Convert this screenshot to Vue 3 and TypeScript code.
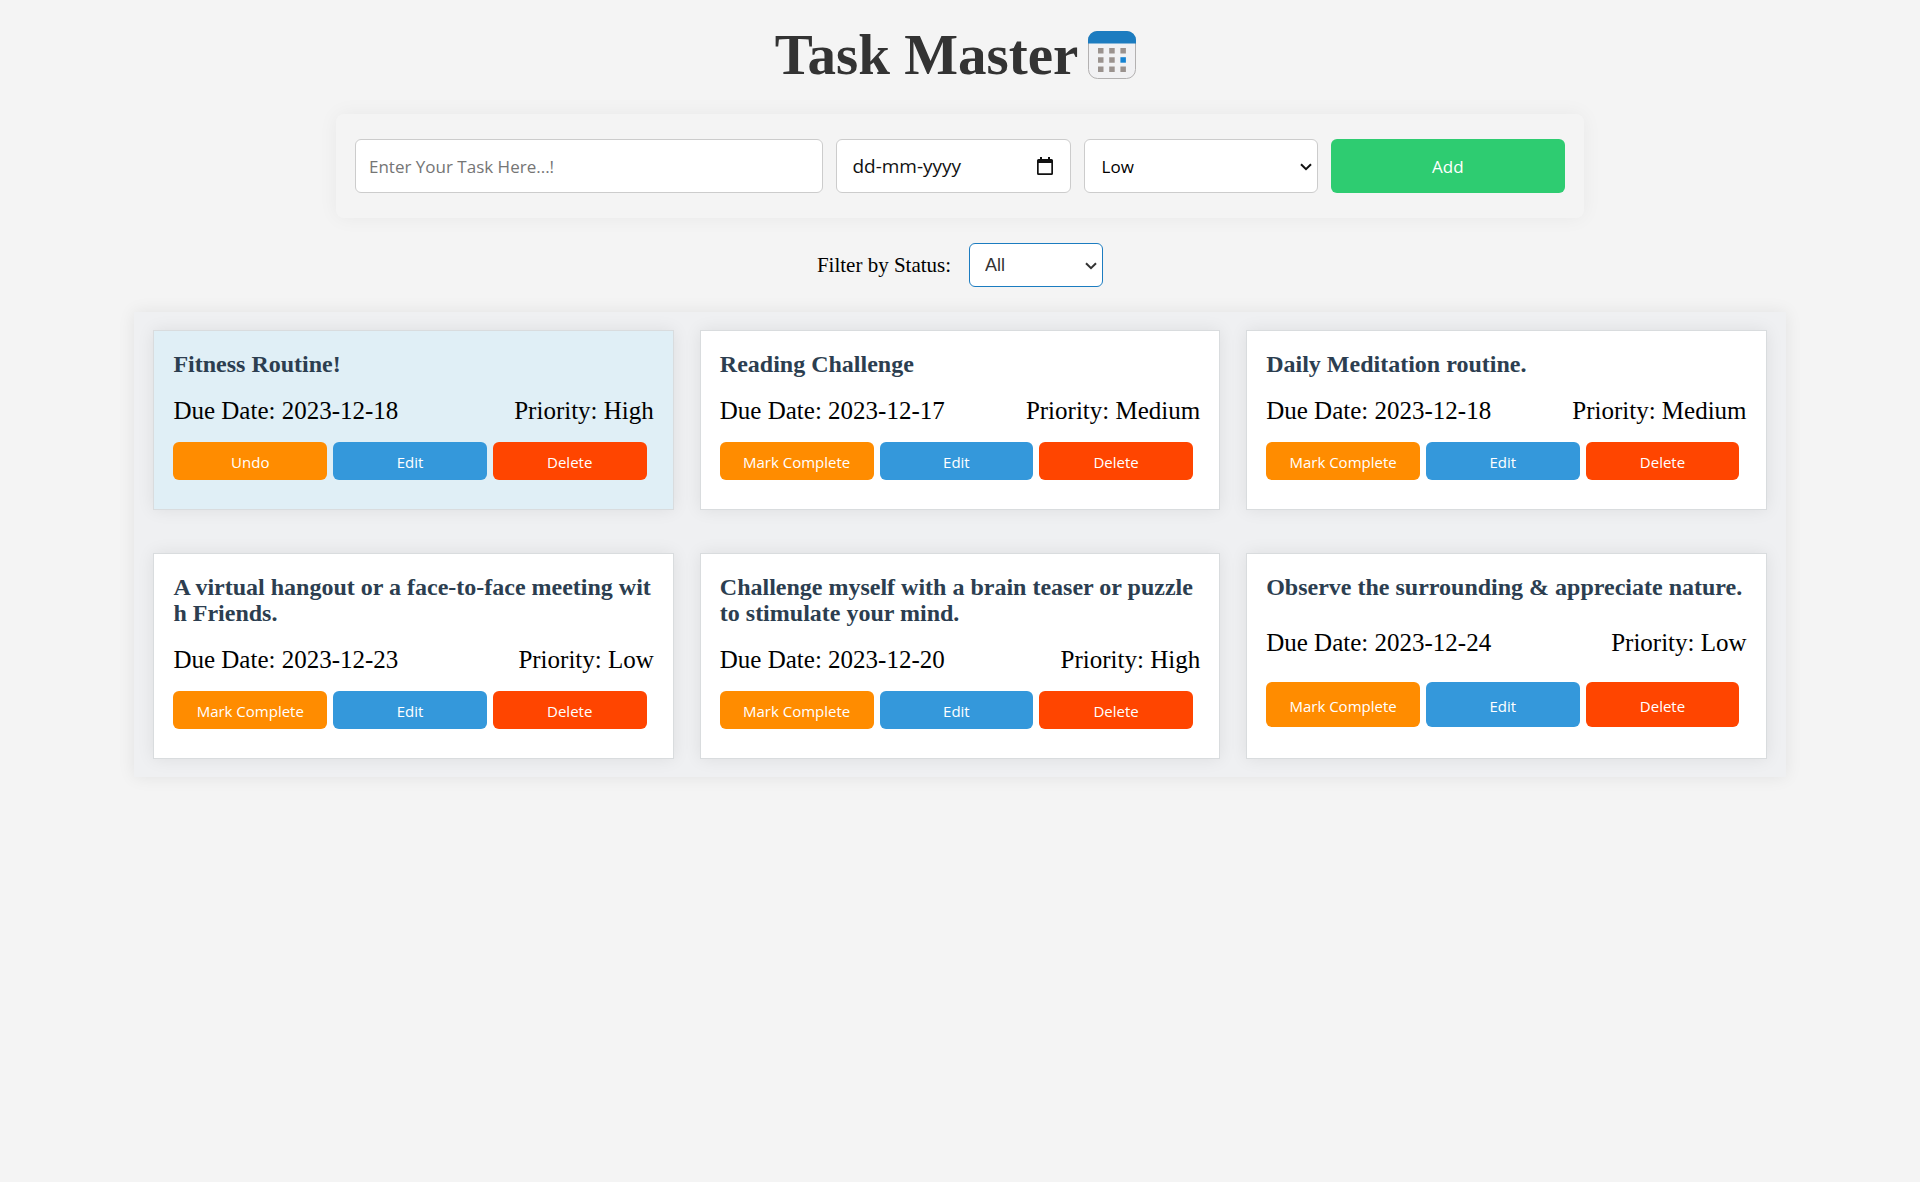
<script setup lang="ts">
import { ref, computed } from 'vue'

type Priority = 'Low' | 'Medium' | 'High'

interface Task {
  id: number
  title: string
  due: string
  priority: Priority
  done: boolean
}

const tasks = ref<Task[]>([
  { id: 1, title: 'Fitness Routine!', due: '2023-12-18', priority: 'High', done: true },
  { id: 2, title: 'Reading Challenge', due: '2023-12-17', priority: 'Medium', done: false },
  { id: 3, title: 'Daily Meditation routine.', due: '2023-12-18', priority: 'Medium', done: false },
  { id: 4, title: 'A virtual hangout or a face-to-face meeting wit\nh Friends.', due: '2023-12-23', priority: 'Low', done: false },
  { id: 5, title: 'Challenge myself with a brain teaser or puzzle\nto stimulate your mind.', due: '2023-12-20', priority: 'High', done: false },
  { id: 6, title: 'Observe the surrounding & appreciate nature.', due: '2023-12-24', priority: 'Low', done: false },
])

const newTitle = ref('')
const newDue = ref('')
const newPriority = ref<Priority>('Low')
const filter = ref('All')

const visibleTasks = computed(() =>
  tasks.value.filter((t) => filter.value === 'All' || (filter.value === 'Completed') === t.done),
)

function addTask() {
  if (!newTitle.value.trim()) return
  tasks.value.push({
    id: Date.now(),
    title: newTitle.value.trim(),
    due: newDue.value.split('-').reverse().join('-'),
    priority: newPriority.value,
    done: false,
  })
  newTitle.value = ''
  newDue.value = ''
}

function editTask(task: Task) {
  const title = window.prompt('Edit task', task.title)
  if (title) task.title = title
}

function removeTask(id: number) {
  tasks.value = tasks.value.filter((t) => t.id !== id)
}
</script>

<template>
  <div class="app">
    <h1 class="heading">
      Task Master
      <svg class="heading-icon" viewBox="0 0 48 48" aria-hidden="true">
        <rect x="0.5" y="0.5" width="47" height="47" rx="9" fill="#f1f1f3" stroke="#b3b1b1" />
        <path d="M0 12.5V9a9 9 0 0 1 9-9h30a9 9 0 0 1 9 9v3.5z" fill="#1c7cc0" />
        <g fill="#9a928e">
          <path d="M10 17h5.500v5.500H10zM21.200 17h5.500v5.500h-5.500zM32.400 17h5.500v5.500h-5.500z" />
          <path d="M10 26.200h5.500v5.500H10zM21.200 26.200h5.500v5.500h-5.500z" />
          <path d="M10 35.500h5.500V41H10zM21.200 35.500h5.500V41h-5.500zM32.400 35.500h5.500V41h-5.500z" />
        </g>
        <path d="M32.400 26.200h5.500v5.500h-5.500z" fill="#1583d2" />
      </svg>
    </h1>

    <form class="task-form" @submit.prevent="addTask">
      <input v-model="newTitle" class="field" type="text" placeholder="Enter Your Task Here...!" aria-label="Task" />
      <div class="control">
        <input v-model="newDue" class="field date-field" type="text" placeholder="dd-mm-yyyy" aria-label="Due date" />
        <svg class="date-icon" viewBox="0 0 16 18" aria-hidden="true">
          <path d="M3 0h2v2h6V0h2v2h1.500A1.500 1.500 0 0 1 16 3.500v13a1.500 1.500 0 0 1-1.500 1.500h-13A1.500 1.500 0 0 1 0 16.500v-13A1.500 1.500 0 0 1 1.500 2H3zM1.700 6v10.300h12.600V6z" fill="#111" />
        </svg>
      </div>
      <div class="control">
        <select v-model="newPriority" class="field pick" aria-label="Priority">
          <option>Low</option>
          <option>Medium</option>
          <option>High</option>
        </select>
        <svg class="chevron" viewBox="0 0 12 8" aria-hidden="true">
          <path d="M1 1.200l5 5 5-5" fill="none" stroke="#111" stroke-width="2" />
        </svg>
      </div>
      <button class="add" type="submit">Add</button>
    </form>

    <div class="filter">
      <label for="status">Filter by Status:</label>
      <div class="control">
        <select id="status" v-model="filter" class="filter-select">
          <option>All</option>
          <option>Completed</option>
          <option>Pending</option>
        </select>
        <svg class="chevron" viewBox="0 0 12 8" aria-hidden="true">
          <path d="M1 1.200l5 5 5-5" fill="none" stroke="#333" stroke-width="2" />
        </svg>
      </div>
    </div>

    <main class="board">
      <article v-for="task in visibleTasks" :key="task.id" class="card" :class="{ done: task.done }">
        <h2 class="title">{{ task.title }}</h2>
        <div class="details">
          <span>Due Date: {{ task.due }}</span>
          <span>Priority: {{ task.priority }}</span>
        </div>
        <div class="actions">
          <button class="action toggle" type="button" @click="task.done = !task.done">
            {{ task.done ? 'Undo' : 'Mark Complete' }}
          </button>
          <button class="action edit" type="button" @click="editTask(task)">Edit</button>
          <button class="action delete" type="button" @click="removeTask(task.id)">Delete</button>
        </div>
      </article>
    </main>
  </div>
</template>

<style>
body {
  background: #f4f4f4;
}
</style>

<style scoped>
* {
  box-sizing: border-box;
}

.app {
  padding: 20px 0 40px;
  font-family: 'Liberation Serif', 'Times New Roman', serif;
  color: #000;
}

.heading {
  display: flex;
  justify-content: center;
  align-items: center;
  margin: 0 0 24px;
  font-size: 57px;
  line-height: 70px;
  font-weight: 700;
  color: #333;
}

.heading-icon {
  width: 48px;
  height: 48px;
  margin: 0 9px 0 10px;
}

.task-form {
  display: grid;
  grid-template-columns: 2fr 1fr 1fr 1fr;
  gap: 13px;
  width: 65%;
  margin: 0 auto;
  padding: 25px 19px;
  border-radius: 8px;
  box-shadow: 0 0 20px rgba(0, 0, 0, 0.05);
}

.field {
  width: 100%;
  min-width: 0;
  height: 54px;
  padding: 0 13px;
  border: 1px solid #ccc;
  border-radius: 6px;
  background: #fff;
  font-family: 'Open Sans', 'Noto Sans', sans-serif;
  font-size: 17px;
  color: #000;
}

.field::placeholder {
  color: #757575;
  opacity: 1;
}

.control {
  position: relative;
}

.date-field {
  padding-left: 15px;
  font-size: 19px;
}

.date-field::placeholder {
  color: #111;
}

.date-icon {
  position: absolute;
  top: 18px;
  right: 18px;
  width: 16px;
  height: 18px;
}

.pick {
  padding-left: 17px;
  appearance: none;
}

.chevron {
  position: absolute;
  top: 50%;
  right: 6px;
  width: 12px;
  height: 8px;
  margin-top: -3px;
  pointer-events: none;
}

.add {
  height: 54px;
  padding: 0;
  border: 0;
  border-radius: 6px;
  background: #2ecc71;
  color: #fff;
  font-family: 'Open Sans', 'Noto Sans', sans-serif;
  font-size: 17px;
}

.filter {
  display: flex;
  justify-content: center;
  align-items: center;
  gap: 18px;
  margin: 25px 0;
  font-size: 21px;
}

.filter-select {
  display: block;
  width: 134px;
  height: 44px;
  padding: 0 0 0 15px;
  border: 1px solid #1c7cc0;
  border-radius: 6px;
  appearance: none;
  background: #fff;
  color: #333;
  font-family: 'Liberation Sans', Arial, sans-serif;
  font-size: 18px;
}

.board {
  display: grid;
  grid-template-columns: repeat(3, 1fr);
  gap: 43px 26px;
  width: 86%;
  margin: 0 auto;
  padding: 18px 19px;
  background: #eff0f2;
  box-shadow: 0 0 16px rgba(0, 0, 0, 0.08);
}

.card {
  display: grid;
  min-width: 0;
  padding: 20px 19px;
  border: 1px solid #d9dcde;
  background: #fff;
  box-shadow: 0 0 16px rgba(0, 0, 0, 0.08);
}

.card.done {
  background: #e0eff6;
}

.title {
  margin: 0 0 20px;
  font-size: 24px;
  line-height: 26px;
  color: #2c3e50;
  white-space: pre-line;
}

.details {
  display: flex;
  justify-content: space-between;
  margin-bottom: 17px;
  font-size: 25px;
  line-height: 28px;
}

.actions {
  display: flex;
  gap: 6px;
  min-height: 47px;
}

.action {
  width: 32%;
  height: 80%;
  padding: 2px 0 0;
  border: 0;
  border-radius: 6px;
  color: #fff;
  font-family: 'Open Sans', 'Noto Sans', sans-serif;
  font-size: 15px;
}

.toggle {
  background: #ff8c00;
}

.edit {
  background: #3498db;
}

.delete {
  background: #ff4500;
}
</style>
